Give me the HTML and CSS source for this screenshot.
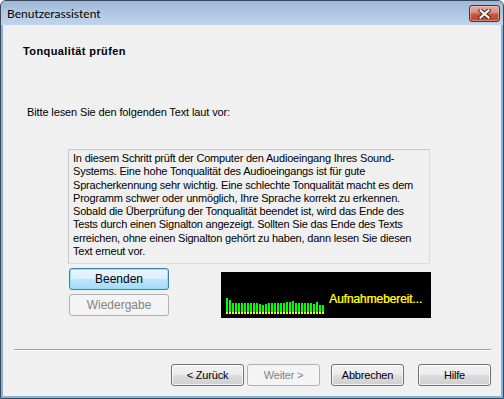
FILE: index.html
```html
<!DOCTYPE html>
<html lang="de">
<head>
<meta charset="utf-8">
<title>Benutzerassistent</title>
<link rel="stylesheet" href="styles.css">
</head>
<body>
<div class="window">
  <div class="titlebar">
    <span class="title">Benutzerassistent</span>
    <button class="close" aria-label="Schließen">
      <svg width="13" height="10" viewBox="0 0 13 10">
        <path d="M2.5 1.5 L10.5 8.5 M10.5 1.5 L2.5 8.5" stroke="#4a2520" stroke-width="4.2" stroke-linecap="square" fill="none"/>
        <path d="M2.5 1.5 L10.5 8.5 M10.5 1.5 L2.5 8.5" stroke="#ffffff" stroke-width="2.2" stroke-linecap="square" fill="none"/>
      </svg>
    </button>
  </div>
  <div class="client">
    <div class="heading">Tonqualität prüfen</div>
    <div class="prompt">Bitte lesen Sie den folgenden Text laut vor:</div>
    <div class="textbox">
      <div class="line">In diesem Schritt prüft der Computer den Audioeingang Ihres Sound-</div>
      <div class="line">Systems. Eine hohe Tonqualität des Audioeingangs ist für gute</div>
      <div class="line">Spracherkennung sehr wichtig. Eine schlechte Tonqualität macht es dem</div>
      <div class="line">Programm schwer oder unmöglich, Ihre Sprache korrekt zu erkennen.</div>
      <div class="line">Sobald die Überprüfung der Tonqualität beendet ist, wird das Ende des</div>
      <div class="line">Tests durch einen Signalton angezeigt. Sollten Sie das Ende des Texts</div>
      <div class="line">erreichen, ohne einen Signalton gehört zu haben, dann lesen Sie diesen</div>
      <div class="line">Text erneut vor.</div>
    </div>
    <div class="controls">
      <div class="btn-col">
        <button class="btn btn-wide btn-focus">Beenden</button>
        <button class="btn btn-wide btn-disabled">Wiedergabe</button>
      </div>
      <div class="meter">
        <div class="bars">
          <span class="bar" style="height:16px"></span>
          <span class="bar" style="height:14px"></span>
          <span class="bar" style="height:11px"></span>
          <span class="bar" style="height:11px"></span>
          <span class="bar" style="height:11px"></span>
          <span class="bar" style="height:11px"></span>
          <span class="bar" style="height:11px"></span>
          <span class="bar" style="height:11px"></span>
          <span class="bar" style="height:11px"></span>
          <span class="bar" style="height:11px"></span>
          <span class="bar" style="height:11px"></span>
          <span class="bar" style="height:10px"></span>
          <span class="bar" style="height:9px"></span>
          <span class="bar" style="height:10px"></span>
          <span class="bar" style="height:11px"></span>
          <span class="bar" style="height:11px"></span>
          <span class="bar" style="height:11px"></span>
          <span class="bar" style="height:11px"></span>
          <span class="bar" style="height:11px"></span>
          <span class="bar" style="height:11px"></span>
          <span class="bar" style="height:12px"></span>
          <span class="bar" style="height:12px"></span>
          <span class="bar" style="height:13px"></span>
          <span class="bar" style="height:11px"></span>
          <span class="bar" style="height:11px"></span>
          <span class="bar" style="height:11px"></span>
          <span class="bar" style="height:11px"></span>
          <span class="bar" style="height:11px"></span>
          <span class="bar" style="height:11px"></span>
          <span class="bar" style="height:10px"></span>
          <span class="bar" style="height:12px"></span>
          <span class="bar" style="height:9px"></span>
          <span class="bar" style="height:9px"></span>
        </div>
        <span class="status">Aufnahmebereit...</span>
      </div>
    </div>
    <div class="separator"></div>
    <div class="footer">
      <button class="btn">&lt; Zurück</button>
      <button class="btn btn-disabled btn-next">Weiter &gt;</button>
      <button class="btn btn-cancel">Abbrechen</button>
      <button class="btn btn-help">Hilfe</button>
    </div>
  </div>
</div>
</body>
</html>
```

FILE: styles.css
```css
html, body {
  margin: 0;
  padding: 0;
}

body {
  width: 504px;
  height: 399px;
  overflow: hidden;
  background: #ffffff;
  font-family: "Liberation Sans", Arial, sans-serif;
  font-size: 11px;
  color: #000000;
}

.window {
  box-sizing: border-box;
  width: 504px;
  height: 399px;
  border: 1px solid #3b4656;
  border-radius: 6px 6px 0 0;
  background: #86b2de;
  display: flex;
  flex-direction: column;
  overflow: hidden;
}

.titlebar {
  height: 24px;
  flex: none;
  display: flex;
  align-items: flex-start;
  background: linear-gradient(#9db8d8, #c0d5ec);
  padding-left: 6px;
}

.title {
  font-family: Lato, "Noto Sans", sans-serif;
  font-size: 12px;
  line-height: 16px;
  margin-top: 5px;
  color: #000000;
  text-shadow: 0 0 6px rgba(255, 255, 255, 0.6);
}

.close {
  box-sizing: border-box;
  width: 31px;
  height: 17px;
  margin: 4px 3px 0 auto;
  padding: 0;
  border: 1px solid #5c2b26;
  border-radius: 3px;
  background: linear-gradient(#e6aca0 0%, #d88a7b 45%, #c75740 55%, #c0432c 100%);
  box-shadow: inset 0 0 0 1px rgba(255, 220, 210, 0.45);
  display: flex;
  align-items: center;
  justify-content: center;
}

.close svg {
  display: block;
}

.client {
  flex: 1;
  margin: 0 2px 2px 2px;
  background: #f0f0f0;
  display: flex;
  flex-direction: column;
}

.heading {
  font-weight: bold;
  line-height: 13px;
  letter-spacing: 0.4px;
  padding: 20px 0 0 20px;
}

.prompt {
  line-height: 13px;
  letter-spacing: -0.12px;
  margin: 48px 0 0 24px;
}

.textbox {
  box-sizing: border-box;
  width: 362px;
  height: 115px;
  margin: 30px 0 0 65px;
  border: 1px solid #c9c9c9;
  border-right-color: #dcdcdc;
  border-bottom-color: #dcdcdc;
  background: #f0f0f0;
  padding: 2px 0 0 4px;
}

.line {
  line-height: 13.3px;
  height: 13.3px;
  letter-spacing: -0.2px;
  white-space: nowrap;
}

.controls {
  display: flex;
  align-items: flex-start;
  margin: 4px 0 0 66px;
}

.btn-col {
  display: flex;
  flex-direction: column;
  gap: 4px;
}

.btn {
  box-sizing: border-box;
  width: 73px;
  height: 22px;
  padding: 0;
  border: 1px solid #707070;
  border-radius: 3px;
  background: linear-gradient(#f2f2f2 0%, #ebebeb 50%, #dddddd 51%, #cfcfcf 100%);
  box-shadow: inset 0 0 0 1px rgba(255, 255, 255, 0.75);
  font-family: "Liberation Sans", Arial, sans-serif;
  font-size: 11px;
  letter-spacing: -0.2px;
  color: #000000;
}

.btn-wide {
  width: 100px;
}

.btn-focus {
  border-color: #3c7fb1;
  background: linear-gradient(#eaf6fd 0%, #d9f0fc 50%, #bee6fd 51%, #a7d9f5 100%);
  box-shadow: inset 0 0 0 1px #8ee3fb;
  font-size: 12px;
  letter-spacing: 0;
}

.btn-disabled {
  border-color: #adb2b5;
  background: #f4f4f4;
  box-shadow: none;
  color: #838383;
}

.btn-wide.btn-disabled {
  font-size: 12px;
  letter-spacing: 0;
}

.meter {
  box-sizing: border-box;
  width: 210px;
  height: 46px;
  margin: 4px 0 0 52px;
  background: #000000;
  display: flex;
  align-items: flex-start;
  padding: 0 0 4px 5px;
}

.bars {
  align-self: flex-end;
  display: flex;
  align-items: flex-end;
  gap: 1px;
}

.bar {
  display: block;
  width: 2px;
  background: linear-gradient(to top, #ffff00 0, #ffff00 2px, #00ff00 2px);
}

.status {
  margin: 20px 0 0 5px;
  font-size: 12px;
  line-height: 14px;
  letter-spacing: -0.1px;
  color: #ffff00;
  text-shadow: 0.5px 0 0 rgba(230, 200, 0, 0.9);
  white-space: nowrap;
}

.separator {
  height: 1px;
  margin: 31px 10px 0 11px;
  border-top: 1px solid #a0a0a0;
  background: #ffffff;
}

.footer {
  display: flex;
  justify-content: flex-end;
  margin-top: 13px;
  padding-right: 10px;
}

.btn-next {
  margin-left: 3px;
}

.btn-cancel {
  margin-left: 11px;
}

.btn-help {
  margin-left: 14px;
}
```
